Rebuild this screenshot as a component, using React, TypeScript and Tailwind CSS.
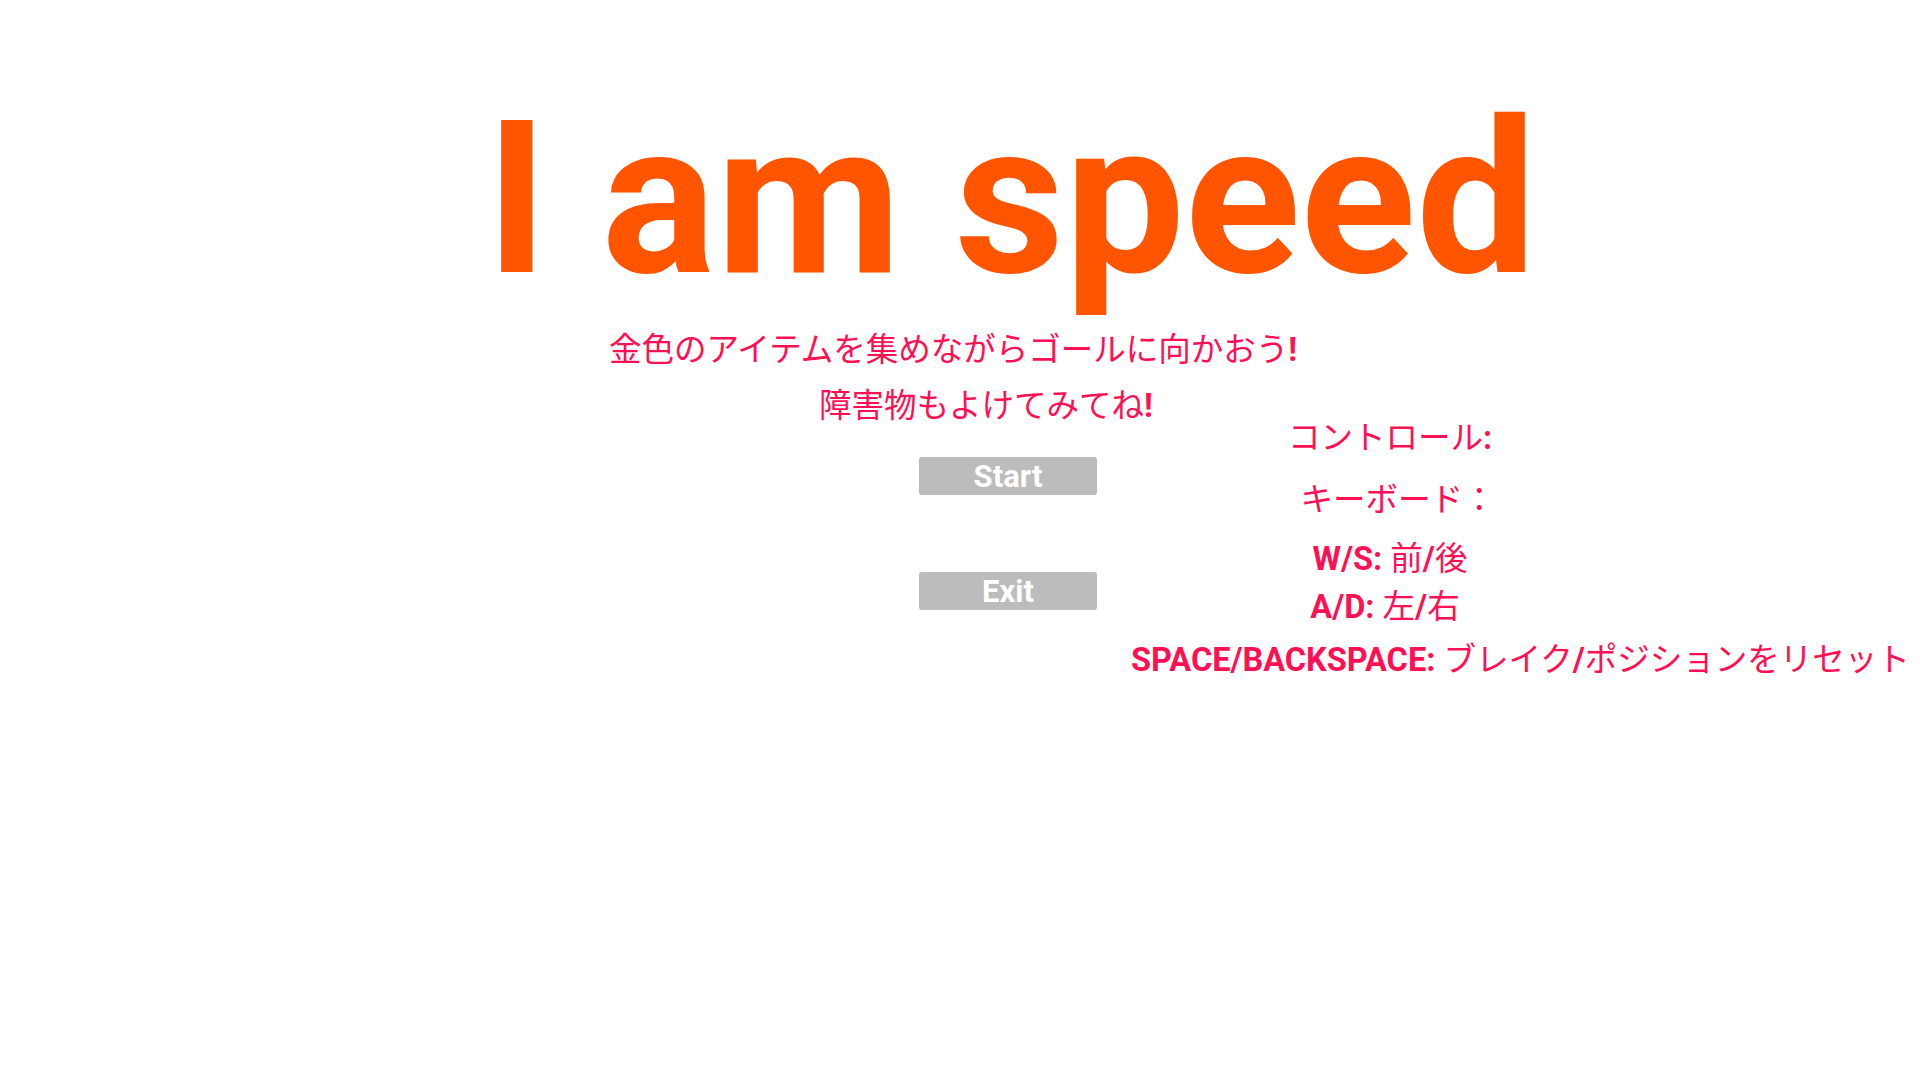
import React from 'react'

const pink = 'text-[#ff1055]'

function Cjk({ children }: { children: React.ReactNode }) {
  return <span className="font-normal">{children}</span>
}

function MenuButton({ label }: { label: string }) {
  return (
    <button className="w-[178px] h-[38px] rounded-[3px] bg-[#bcbcbc] text-white text-[31px] font-bold leading-none flex items-center justify-center">
      {label}
    </button>
  )
}

export default function App() {
  return (
    <div
      className="w-[1920px] h-[1080px] bg-white overflow-hidden"
      style={{ fontFamily: 'Roboto, "Noto Sans CJK JP", sans-serif' }}
    >
      {/* Title */}
      <div className="pt-[92px] pl-[102px] flex justify-center">
        <h1 className="text-[214px] leading-[214px] font-bold text-[#ff5500] whitespace-nowrap">I am speed</h1>
      </div>

      {/* Intro */}
      <div className={`mt-[28px] pr-[14px] flex justify-center text-[32.5px] leading-[32px] font-bold ${pink}`}>
        <p className="whitespace-nowrap">
          <Cjk>金色のアイテムを集めながらゴールに向かおう</Cjk>!
        </p>
      </div>
      <div className={`mt-[24px] pl-[52px] flex justify-center text-[32.5px] leading-[32px] font-bold ${pink}`}>
        <p className="whitespace-nowrap">
          <Cjk>障害物もよけてみてね</Cjk>!
        </p>
      </div>

      <div className="flex">
        {/* Buttons */}
        <div className="ml-[919px] pt-[35px] flex flex-col gap-[77px]">
          <MenuButton label="Start" />
          <MenuButton label="Exit" />
        </div>

        {/* Controls */}
        <div className={`ml-[34px] w-[518px] flex flex-col items-center text-[32.5px] leading-[32px] font-bold ${pink}`}>
          <p className="whitespace-nowrap"><Cjk>コントロール</Cjk>:</p>
          <p className="mt-[30px] pl-[16px] whitespace-nowrap"><Cjk>キーボード：</Cjk></p>
          <p className="mt-[27px] whitespace-nowrap">W/S: <Cjk>前</Cjk>/<Cjk>後</Cjk></p>
          <p className="mt-[16px] pr-[10px] whitespace-nowrap">A/D: <Cjk>左</Cjk>/<Cjk>右</Cjk></p>
          <p className="mt-[21px] self-start whitespace-nowrap">
            SPACE/BACKSPACE: <Cjk>ブレイク</Cjk>/<Cjk>ポジションをリセット</Cjk>
          </p>
        </div>
      </div>
    </div>
  )
}
